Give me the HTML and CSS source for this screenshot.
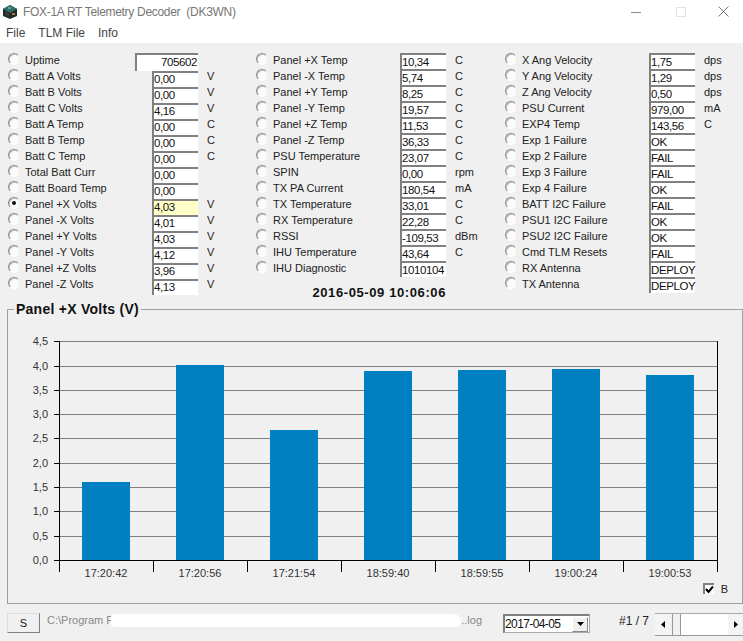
FILE: index.html
```html
<!DOCTYPE html>
<html lang="en">
<head>
    <meta charset="UTF-8">
    <title>FOX-1A RT Telemetry Decoder (DK3WN)</title>
    <link rel="stylesheet" href="styles.css">
</head>
<body>
    <div id="titlebar">
        <svg class="app-icon" width="16" height="16" viewBox="0 0 16 16">
            <polygon points="1,5 8,1 15,5 15,12 8,15 1,12" fill="#1c2a28"/>
            <polygon points="1,5 8,1 15,5 8,9" fill="#2f6f68"/>
            <polygon points="3,7 7,9 7,13 3,11" fill="#3d3a2a"/>
            <rect x="10" y="9" width="3" height="2" fill="#b5722e"/>
            <rect x="6" y="3" width="3" height="2" fill="#59a89c"/>
        </svg>
        <span class="app-title">FOX-1A RT Telemetry Decoder&nbsp; (DK3WN)</span>
        <div class="window-buttons">
            <span class="win-btn"><svg width="10" height="10" viewBox="0 0 10 10"><path d="M0 5.5H10" stroke="#8a8a8a"/></svg></span>
            <span class="win-btn"><svg width="10" height="10" viewBox="0 0 10 10"><rect x="0.5" y="0.5" width="9" height="9" fill="none" stroke="#e2e2e2"/></svg></span>
            <span class="win-btn win-btn-close"><svg width="11" height="11" viewBox="0 0 11 11"><path d="M0.5 0.5L10.5 10.5M10.5 0.5L0.5 10.5" stroke="#777"/></svg></span>
        </div>
    </div>
    <div id="menubar">
        <span class="menu-item">File</span>
        <span class="menu-item">TLM File</span>
        <span class="menu-item">Info</span>
    </div>

    <div id="telemetry">
        <div class="column column-low">
            <div class="row row-wide"><span class="radio"></span><span class="label">Uptime</span><span class="field">705602</span></div>
            <div class="row"><span class="radio"></span><span class="label">Batt A Volts</span><span class="field">0,00</span><span class="unit">V</span></div>
            <div class="row"><span class="radio"></span><span class="label">Batt B Volts</span><span class="field">0,00</span><span class="unit">V</span></div>
            <div class="row"><span class="radio"></span><span class="label">Batt C Volts</span><span class="field">4,16</span><span class="unit">V</span></div>
            <div class="row"><span class="radio"></span><span class="label">Batt A Temp</span><span class="field">0,00</span><span class="unit">C</span></div>
            <div class="row"><span class="radio"></span><span class="label">Batt B Temp</span><span class="field">0,00</span><span class="unit">C</span></div>
            <div class="row"><span class="radio"></span><span class="label">Batt C Temp</span><span class="field">0,00</span><span class="unit">C</span></div>
            <div class="row"><span class="radio"></span><span class="label">Total Batt Curr</span><span class="field">0,00</span></div>
            <div class="row"><span class="radio"></span><span class="label">Batt Board Temp</span><span class="field">0,00</span></div>
            <div class="row"><span class="radio radio-on"></span><span class="label">Panel +X Volts</span><span class="field field-active">4,03</span><span class="unit">V</span></div>
            <div class="row"><span class="radio"></span><span class="label">Panel -X Volts</span><span class="field">4,01</span><span class="unit">V</span></div>
            <div class="row"><span class="radio"></span><span class="label">Panel +Y Volts</span><span class="field">4,03</span><span class="unit">V</span></div>
            <div class="row"><span class="radio"></span><span class="label">Panel -Y Volts</span><span class="field">4,12</span><span class="unit">V</span></div>
            <div class="row"><span class="radio"></span><span class="label">Panel +Z Volts</span><span class="field">3,96</span><span class="unit">V</span></div>
            <div class="row"><span class="radio"></span><span class="label">Panel -Z Volts</span><span class="field">4,13</span><span class="unit">V</span></div>
        </div>
        <div class="column">
            <div class="row"><span class="radio"></span><span class="label">Panel +X Temp</span><span class="field">10,34</span><span class="unit">C</span></div>
            <div class="row"><span class="radio"></span><span class="label">Panel -X Temp</span><span class="field">5,74</span><span class="unit">C</span></div>
            <div class="row"><span class="radio"></span><span class="label">Panel +Y Temp</span><span class="field">8,25</span><span class="unit">C</span></div>
            <div class="row"><span class="radio"></span><span class="label">Panel -Y Temp</span><span class="field">19,57</span><span class="unit">C</span></div>
            <div class="row"><span class="radio"></span><span class="label">Panel +Z Temp</span><span class="field">11,53</span><span class="unit">C</span></div>
            <div class="row"><span class="radio"></span><span class="label">Panel -Z Temp</span><span class="field">36,33</span><span class="unit">C</span></div>
            <div class="row"><span class="radio"></span><span class="label">PSU Temperature</span><span class="field">23,07</span><span class="unit">C</span></div>
            <div class="row"><span class="radio"></span><span class="label">SPIN</span><span class="field">0,00</span><span class="unit">rpm</span></div>
            <div class="row"><span class="radio"></span><span class="label">TX PA Current</span><span class="field">180,54</span><span class="unit">mA</span></div>
            <div class="row"><span class="radio"></span><span class="label">TX Temperature</span><span class="field">33,01</span><span class="unit">C</span></div>
            <div class="row"><span class="radio"></span><span class="label">RX Temperature</span><span class="field">22,28</span><span class="unit">C</span></div>
            <div class="row"><span class="radio"></span><span class="label">RSSI</span><span class="field">-109,53</span><span class="unit">dBm</span></div>
            <div class="row"><span class="radio"></span><span class="label">IHU Temperature</span><span class="field">43,64</span><span class="unit">C</span></div>
            <div class="row"><span class="radio"></span><span class="label">IHU Diagnostic</span><span class="field">1010104</span></div>
            <div class="timestamp">2016-05-09 10:06:06</div>
        </div>
        <div class="column">
            <div class="row"><span class="radio"></span><span class="label">X Ang Velocity</span><span class="field">1,75</span><span class="unit">dps</span></div>
            <div class="row"><span class="radio"></span><span class="label">Y Ang Velocity</span><span class="field">1,29</span><span class="unit">dps</span></div>
            <div class="row"><span class="radio"></span><span class="label">Z Ang Velocity</span><span class="field">0,50</span><span class="unit">dps</span></div>
            <div class="row"><span class="radio"></span><span class="label">PSU Current</span><span class="field">979,00</span><span class="unit">mA</span></div>
            <div class="row"><span class="radio"></span><span class="label">EXP4 Temp</span><span class="field">143,56</span><span class="unit">C</span></div>
            <div class="row"><span class="radio"></span><span class="label">Exp 1 Failure</span><span class="field">OK</span></div>
            <div class="row"><span class="radio"></span><span class="label">Exp 2 Failure</span><span class="field">FAIL</span></div>
            <div class="row"><span class="radio"></span><span class="label">Exp 3 Failure</span><span class="field">FAIL</span></div>
            <div class="row"><span class="radio"></span><span class="label">Exp 4 Failure</span><span class="field">OK</span></div>
            <div class="row"><span class="radio"></span><span class="label">BATT I2C Failure</span><span class="field">FAIL</span></div>
            <div class="row"><span class="radio"></span><span class="label">PSU1 I2C Failure</span><span class="field">OK</span></div>
            <div class="row"><span class="radio"></span><span class="label">PSU2 I2C Failure</span><span class="field">OK</span></div>
            <div class="row"><span class="radio"></span><span class="label">Cmd TLM Resets</span><span class="field">FAIL</span></div>
            <div class="row"><span class="radio"></span><span class="label">RX Antenna</span><span class="field">DEPLOY</span></div>
            <div class="row"><span class="radio"></span><span class="label">TX Antenna</span><span class="field">DEPLOY</span></div>
        </div>
    </div>

    <fieldset id="chart-box">
        <legend>Panel +X Volts (V)</legend>
        <svg class="chart" width="734" height="266" viewBox="8 317 734 266">
            <g class="grid">
                <path d="M59 341.5H717M59 366.5H717M59 390.5H717M59 414.5H717M59 438.5H717M59 463.5H717M59 487.5H717M59 511.5H717M59 536.5H717"/>
            </g>
            <g class="bars">
                <rect x="82" y="482" width="48" height="78"/>
                <rect x="176" y="365" width="48" height="195"/>
                <rect x="270" y="430" width="48" height="130"/>
                <rect x="364" y="371" width="48" height="189"/>
                <rect x="458" y="370" width="48" height="190"/>
                <rect x="552" y="369" width="48" height="191"/>
                <rect x="646" y="375" width="48" height="185"/>
            </g>
            <g class="axis">
                <path d="M59.5 341V572M717.5 341V572M54 560.5H718"/>
                <path d="M54 341.5H59M54 366.5H59M54 390.5H59M54 414.5H59M54 438.5H59M54 463.5H59M54 487.5H59M54 511.5H59M54 536.5H59"/>
                <path d="M153.5 560V572M247.5 560V572M341.5 560V572M435.5 560V572M529.5 560V572M623.5 560V572"/>
            </g>
            <g class="y-labels">
                <text x="48" y="345">4,5</text>
                <text x="48" y="370">4,0</text>
                <text x="48" y="394">3,5</text>
                <text x="48" y="418">3,0</text>
                <text x="48" y="442">2,5</text>
                <text x="48" y="467">2,0</text>
                <text x="48" y="491">1,5</text>
                <text x="48" y="515">1,0</text>
                <text x="48" y="540">0,5</text>
                <text x="48" y="564">0,0</text>
            </g>
            <g class="x-labels">
                <text x="106" y="577">17:20:42</text>
                <text x="200" y="577">17:20:56</text>
                <text x="294" y="577">17:21:54</text>
                <text x="388" y="577">18:59:40</text>
                <text x="482" y="577">18:59:55</text>
                <text x="576" y="577">19:00:24</text>
                <text x="670" y="577">19:00:53</text>
            </g>
        </svg>
        <div class="chart-options">
            <span class="checkbox"><svg width="9" height="9" viewBox="0 0 9 9"><path d="M1 4L3.5 7L8 1.5" fill="none" stroke="#000" stroke-width="2"/></svg></span>
            <span>B</span>
        </div>
    </fieldset>

    <div id="statusbar">
        <button class="btn-s">S</button>
        <div class="path"><span>C:\Program F</span><span class="redacted"></span><span>..log</span></div>
        <div class="combo">
            <span class="combo-value">2017-04-05</span>
            <span class="combo-arrow"><svg width="7" height="4" viewBox="0 0 7 4"><polygon points="0,0 7,0 3.5,4" fill="#000"/></svg></span>
        </div>
        <span class="counter">#1 / 7</span>
        <div class="scrollbar">
            <span class="scroll-btn"><svg width="4" height="7" viewBox="0 0 4 7"><polygon points="4,0 4,7 0,3.5" fill="#000"/></svg></span>
            <span class="scroll-thumb"></span>
            <span class="scroll-track"></span>
            <span class="scroll-btn"><svg width="4" height="7" viewBox="0 0 4 7"><polygon points="0,0 0,7 4,3.5" fill="#000"/></svg></span>
        </div>
    </div>
</body>
</html>
```

FILE: styles.css
```css
body {
    margin: 0;
    height: 641px;
    overflow: hidden;
    background: #f0f0f0;
    color: #222;
    font-family: "Liberation Sans", Arial, sans-serif;
    font-size: 11px;
}

#titlebar {
    display: flex;
    align-items: center;
    height: 23px;
    background: #fff;
}

.app-icon {
    margin-left: 2px;
}

.app-title {
    margin-left: 5px;
    color: #777;
    font-size: 12px;
    letter-spacing: -0.3px;
}

.window-buttons {
    display: flex;
    margin-left: auto;
}

.win-btn {
    display: flex;
    justify-content: center;
    align-items: center;
    width: 45px;
}

.win-btn-close {
    width: 40px;
}

#menubar {
    display: flex;
    align-items: center;
    gap: 13px;
    height: 20px;
    padding-left: 6px;
    background: #fff;
    color: #444;
    font-size: 12px;
}

#telemetry {
    display: grid;
    grid-template-columns: 248px 249px 1fr;
    padding: 9px 0 0 8px;
}

.row {
    display: flex;
    height: 16px;
    line-height: 16px;
}

.radio {
    box-sizing: border-box;
    flex: none;
    position: relative;
    width: 12px;
    height: 12px;
    margin: 1px 5px 0 0;
    border: 1px solid;
    border-color: #888 #eee #fff #888;
    border-radius: 50%;
    background: #fbfbfb;
    box-shadow: inset 1px 1px 0 #c8c8c8;
}

.radio-on::after {
    content: "";
    position: absolute;
    left: 3px;
    top: 3px;
    width: 4px;
    height: 4px;
    border-radius: 50%;
    background: #111;
}

.label {
    flex: none;
    width: 127px;
    white-space: nowrap;
}

.field {
    box-sizing: border-box;
    flex: none;
    width: 46px;
    height: 16px;
    margin-top: 1px;
    border-top: 2px solid #808080;
    border-left: 2px solid #808080;
    background: #fff;
    color: #111;
    font-size: 11.5px;
    letter-spacing: -0.4px;
    line-height: 14px;
    white-space: nowrap;
}

.column-low .field {
    margin-top: 3px;
    line-height: 12px;
}

.field-active {
    background: #ffffc8;
}

.column-low .row-wide .label {
    width: 110px;
}

.column-low .row-wide .field {
    width: 63px;
    height: 18px;
    margin-top: 1px;
    padding-right: 1px;
    line-height: 15px;
    text-align: right;
}

.unit {
    margin-left: 9px;
}

.timestamp {
    width: 190px;
    height: 16px;
    margin-top: 9px;
    color: #111;
    font-weight: bold;
    font-size: 13px;
    letter-spacing: 0.6px;
    line-height: 16px;
    text-align: right;
}

#chart-box {
    box-sizing: border-box;
    width: 736px;
    height: 302px;
    margin: 1px 0 0 7px;
    padding: 0;
    border: 1px solid #a0a0a0;
}

#chart-box legend {
    margin-left: 6px;
    padding: 0 2px;
    color: #111;
    font-weight: bold;
    font-size: 14px;
    letter-spacing: 0.25px;
    line-height: 15px;
}

.chart {
    display: block;
}

.grid path {
    fill: none;
    stroke: #808080;
}

.bars rect {
    fill: #0080c0;
}

.axis path {
    fill: none;
    stroke: #000;
}

.y-labels text,
.x-labels text {
    fill: #333;
    font-size: 11px;
}

.y-labels text {
    text-anchor: end;
}

.x-labels text {
    text-anchor: middle;
}

.chart-options {
    display: flex;
    justify-content: flex-end;
    align-items: center;
    gap: 7px;
    height: 11px;
    padding-right: 14px;
}

.checkbox {
    box-sizing: border-box;
    display: flex;
    justify-content: center;
    align-items: center;
    width: 11px;
    height: 11px;
    border-top: 2px solid #808080;
    border-left: 2px solid #808080;
    background: #fff;
}

#statusbar {
    display: flex;
    align-items: flex-start;
    height: 28px;
    margin-top: 9px;
    padding-left: 7px;
}

.btn-s {
    box-sizing: border-box;
    width: 33px;
    height: 20px;
    padding: 0;
    border: 1px solid;
    border-color: #ddd #808080 #808080 #ddd;
    background: #f0f0f0;
    color: #222;
    font-family: inherit;
    font-size: 11px;
}

.path {
    display: flex;
    width: 435px;
    height: 14px;
    margin-left: 7px;
    color: #888;
    line-height: 14px;
}

.redacted {
    flex: 1;
    height: 13px;
    margin: 1px 0 0 -2px;
    border-radius: 4px 8px 6px 3px;
    background: #fff;
}

.combo {
    box-sizing: border-box;
    display: flex;
    justify-content: space-between;
    align-items: center;
    width: 87px;
    height: 19px;
    margin: 1px 0 0 21px;
    padding-right: 1px;
    border: 1px solid #aaa;
    border-top: 2px solid #808080;
    border-left: 2px solid #808080;
    background: #fff;
    color: #111;
    font-size: 12px;
    letter-spacing: -0.6px;
}

.combo-arrow {
    box-sizing: border-box;
    display: flex;
    justify-content: center;
    align-items: center;
    width: 16px;
    height: 15px;
    border: 1px solid;
    border-color: #fff #888 #888 #fff;
    background: #f0f0f0;
}

.counter {
    width: 36px;
    margin: 1px 0 0 29px;
    color: #222;
    font-size: 12px;
    line-height: 14px;
}

.scrollbar {
    box-sizing: border-box;
    display: flex;
    flex: none;
    width: 88px;
    height: 23px;
    border-top: 1px solid #aaa;
    border-bottom: 1px solid #999;
}

.scroll-btn {
    display: flex;
    justify-content: center;
    align-items: center;
    width: 15px;
    background: #f4f4f4;
}

.scroll-thumb {
    box-sizing: border-box;
    width: 9px;
    margin-left: 2px;
    border-left: 1px solid #999;
    border-right: 1px solid #999;
    background: #f0f0f0;
}

.scroll-track {
    flex: 1;
    background: #fff;
}
```
